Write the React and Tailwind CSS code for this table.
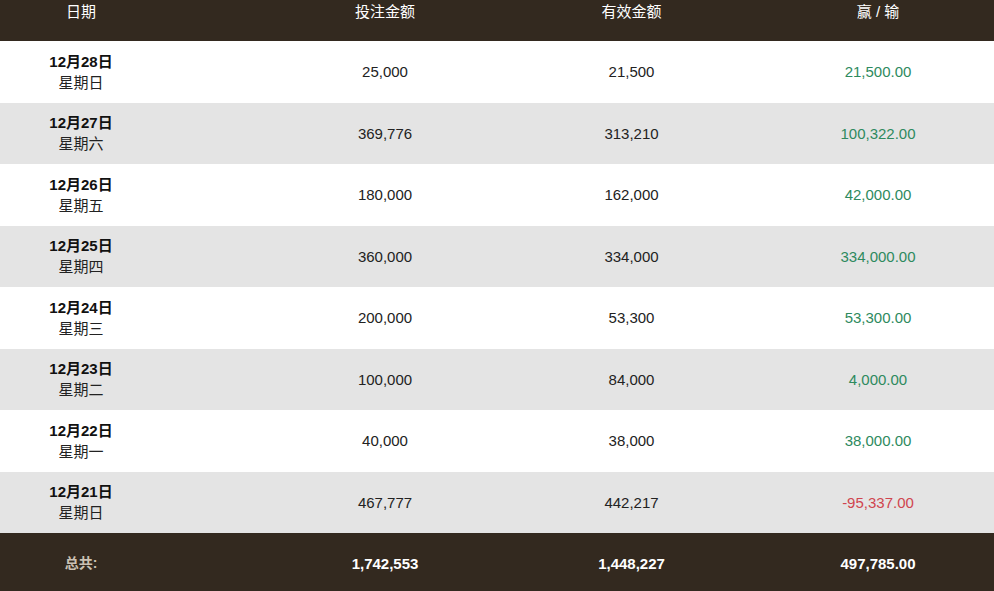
const rows = [
  { date: "12月28日", week: "星期日", bet: "25,000", valid: "21,500", win: "21,500.00" },
  { date: "12月27日", week: "星期六", bet: "369,776", valid: "313,210", win: "100,322.00" },
  { date: "12月26日", week: "星期五", bet: "180,000", valid: "162,000", win: "42,000.00" },
  { date: "12月25日", week: "星期四", bet: "360,000", valid: "334,000", win: "334,000.00" },
  { date: "12月24日", week: "星期三", bet: "200,000", valid: "53,300", win: "53,300.00" },
  { date: "12月23日", week: "星期二", bet: "100,000", valid: "84,000", win: "4,000.00" },
  { date: "12月22日", week: "星期一", bet: "40,000", valid: "38,000", win: "38,000.00" },
  { date: "12月21日", week: "星期日", bet: "467,777", valid: "442,217", win: "-95,337.00" },
];

const cols = "grid grid-cols-[262px_246px_247px_246px] items-center text-center";

export default function App() {
  return (
    <div className="h-[591px] w-[994px] overflow-hidden bg-white font-['Liberation_Sans','Noto_Sans_CJK_SC',sans-serif] text-[15px] leading-[21px] text-[#222]">
      <div className={`${cols} h-[41px] items-start bg-[#33291f] pt-px text-white`}>
        <div className="pr-[100px]">日期</div>
        <div>投注金额</div>
        <div>有效金额</div>
        <div>赢 / 输</div>
      </div>
      {rows.map((r, i) => (
        <div
          key={r.date}
          className={`${cols} h-[61.5px] ${i % 2 ? "bg-[#e4e4e4]" : "bg-white"}`}
        >
          <div className="pr-[100px]">
            <div className="font-bold text-[#111]">{r.date}</div>
            <div>{r.week}</div>
          </div>
          <div>{r.bet}</div>
          <div>{r.valid}</div>
          <div className={r.win.startsWith("-") ? "text-[#d0454f]" : "text-[#2e8a5e]"}>{r.win}</div>
        </div>
      ))}
      <div className={`${cols} h-[61.5px] bg-[#33291f] font-bold text-white`}>
        <div className="pr-[100px] text-[14px] text-[#cbc1b4]">总共:</div>
        <div>1,742,553</div>
        <div>1,448,227</div>
        <div>497,785.00</div>
      </div>
    </div>
  );
}
